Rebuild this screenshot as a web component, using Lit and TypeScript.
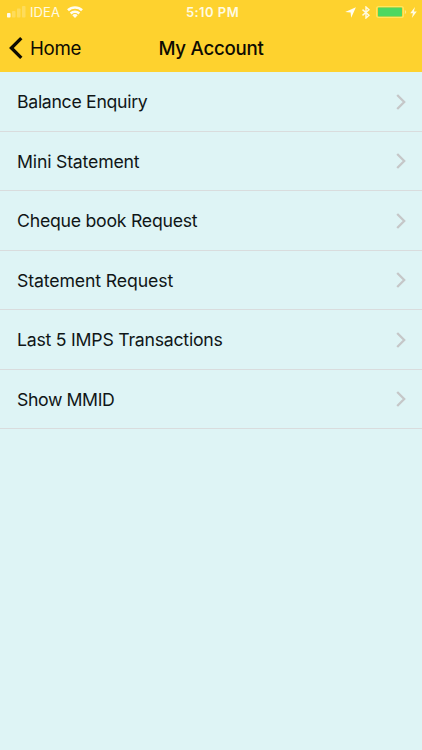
import { LitElement, html, css } from "lit";
import { customElement, property } from "lit/decorators.js";

@customElement("status-bar")
class StatusBar extends LitElement {
  static styles = css`
    :host {
      display: grid;
      grid-template-columns: 1fr auto 1fr;
      align-items: center;
      height: 24px;
      color: #fffbe2;
      font-size: 13px;
      line-height: 24px;
    }
    .left, .right { display: flex; align-items: center; }
    .left { padding-left: 7px; }
    .right { justify-content: flex-end; padding-right: 5px; }
    .carrier { margin: 0 7px 0 4px; letter-spacing: 0.1px; }
    .time { font-weight: 600; letter-spacing: 0.45px; padding-left: 3px; }
    .arrow { margin-right: 6px; }
    .bluetooth { margin-right: 6px; }
    .battery { margin-right: 3px; }
    svg { display: block; }
  `;

  render() {
    return html`
      <div class="left">
        <svg width="19" height="12" viewBox="0 0 19 12" fill="#fff8d2">
          <rect y="7" width="3.5" height="4.5" rx=".7" fill="#fffdf0" />
          <rect x="5" y="5" width="3.5" height="6.5" rx=".7" opacity=".28" />
          <rect x="10" y="2.5" width="3.5" height="9" rx=".7" opacity=".28" />
          <rect x="15" y="0" width="3.5" height="11.5" rx=".7" opacity=".28" />
        </svg>
        <span class="carrier">IDEA</span>
        <svg width="16" height="12" viewBox="0 0 16 12" fill="none" stroke="#fffdf0" stroke-width="2.6">
          <path d="M1 4.3a10 10 0 0 1 14 0M3.7 7.5a6.2 6.2 0 0 1 8.6 0" />
          <path d="M8 11.9 5.3 9.3a3.6 3.6 0 0 1 5.4 0z" fill="#fffdf0" stroke="none" />
        </svg>
      </div>
      <span class="time">5:10 PM</span>
      <div class="right">
        <svg class="arrow" width="11" height="11" viewBox="0 0 11 11" fill="#fffdf0">
          <path d="M10.9.3 6.2 10.7 5.6 5.6.2 5z" />
        </svg>
        <svg class="bluetooth" width="8" height="13" viewBox="0 0 8 13" fill="none" stroke="#fffbe2" stroke-width="1.4">
          <path d="M.5 3.6 7 9.2 4 12V1l3 2.8L.5 9.4" />
        </svg>
        <svg class="battery" width="31" height="12" viewBox="0 0 31 12">
          <rect x=".6" y=".6" width="26.8" height="10.8" rx="2" fill="none" stroke="#ffe65f" stroke-width="1.2" />
          <rect x="2" y="1.5" width="24" height="9" rx=".7" fill="#4cd860" />
          <path d="M28.8 4v4q1.4-.7 1.4-2t-1.4-2z" fill="#ffe98c" />
        </svg>
        <svg width="7" height="11" viewBox="0 0 6 10" fill="#fffbe2">
          <path d="M4.3 0 0 5.7h2.5L1.5 10 6 4.1H3.4z" />
        </svg>
      </div>
    `;
  }
}

@customElement("menu-row")
class MenuRow extends LitElement {
  @property() label = "";
  @property({ type: Number }) tracking = 0;

  static styles = css`
    :host {
      box-sizing: border-box;
      display: flex;
      align-items: center;
      justify-content: space-between;
      height: 59.5px;
      padding: 1px 16px 0 17px;
      border-bottom: 1px solid #d9dcdd;
      font-size: 17.7px;
      color: #101617;
    }
  `;

  render() {
    return html`
      <span style="letter-spacing: ${this.tracking}px">${this.label}</span>
      <svg width="10" height="16" viewBox="0 0 10 16" fill="none" stroke="#c5c7c8" stroke-width="2.3">
        <path d="m1.2 1 7 7-7 7" />
      </svg>
    `;
  }
}

@customElement("app-root")
class AppRoot extends LitElement {
  static styles = css`
    :host {
      display: block;
      min-height: 100vh;
      background: #def4f5;
      font-family: Inter, "Liberation Sans", sans-serif;
    }
    .header { height: 72px; background: #fed22e; }
    .nav {
      display: grid;
      grid-template-columns: 1fr auto 1fr;
      align-items: center;
      height: 48px;
      color: #0d0b02;
    }
    .back { display: flex; align-items: center; gap: 7px; padding-left: 9px; font-size: 18.7px; letter-spacing: -0.3px; }
    .title { font-size: 18.7px; font-weight: 500; letter-spacing: -0.25px; }
  `;

  private items = [
    { label: "Balance Enquiry", tracking: -0.31 },
    { label: "Mini Statement", tracking: -0.19 },
    { label: "Cheque book Request", tracking: -0.25 },
    { label: "Statement Request", tracking: -0.13 },
    { label: "Last 5 IMPS Transactions", tracking: -0.24 },
    { label: "Show MMID", tracking: -0.4 },
  ];

  render() {
    return html`
      <div class="header">
        <status-bar></status-bar>
        <div class="nav">
          <div class="back">
            <svg width="14" height="22" viewBox="0 0 14 22" fill="none" stroke="#0d0b02" stroke-width="3.3">
              <path d="M12.3 1.2 2.4 11l9.9 9.8" />
            </svg>
            <span>Home</span>
          </div>
          <span class="title">My Account</span>
        </div>
      </div>
      ${this.items.map(
        (item) => html`<menu-row .label=${item.label} .tracking=${item.tracking}></menu-row>`,
      )}
    `;
  }
}
